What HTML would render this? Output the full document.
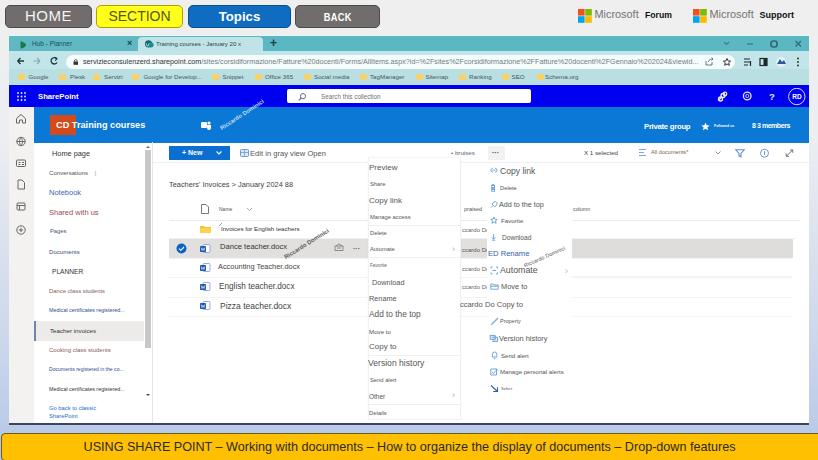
<!DOCTYPE html>
<html><head><meta charset="utf-8">
<style>
*{margin:0;padding:0;box-sizing:border-box}
html,body{width:818px;height:460px;overflow:hidden}
body{position:relative;font-family:"Liberation Sans",sans-serif;background:linear-gradient(180deg,#efefef 0%,#eceef2 30%,#cdd8ec 72%,#b4c7e8 100%)}
.a{position:absolute;white-space:nowrap}
.btn{position:absolute;top:5px;height:23px;border-radius:5px;text-align:center;line-height:23px}
#win{position:absolute;left:9px;top:37px;width:800px;height:388px;background:#fff;overflow:hidden;border-bottom:2px solid #3b4760}
</style></head><body>
<!-- nav buttons -->
<div class="btn" style="left:5px;width:87px;background:#716d6c;border:1px solid #4e4a49;color:#f4f4f4;font-size:15px;letter-spacing:0.5px;line-height:19.6px">HOME</div>
<div class="btn" style="left:96px;width:87px;background:#ffff1a;border:1px solid #a9a300;color:#55551c;font-size:14px;line-height:21px">SECTION</div>
<div class="btn" style="left:188px;width:103px;background:#0f6cc0;border:1px solid #0b4f8e;color:#fff;font-size:13.2px;font-weight:bold;line-height:21px">Topics</div>
<div class="btn" style="left:295px;width:85px;background:#716d6c;border:1px solid #4e4a49;color:#fff;font-size:9.3px;font-weight:bold;letter-spacing:0.3px"><span style="display:inline-block;font-size:11px;transform:scaleX(0.84);letter-spacing:0.4px">BACK</span></div>


<!-- microsoft logos -->
<svg class="a" style="left:578px;top:8.5px" width="14" height="14" viewBox="0 0 14 14"><rect x="0" y="0" width="6.6" height="6.6" fill="#f25022"/><rect x="7.2" y="0" width="6.6" height="6.6" fill="#7fba00"/><rect x="0" y="7.2" width="6.6" height="6.6" fill="#00a4ef"/><rect x="7.2" y="7.2" width="6.6" height="6.6" fill="#ffb900"/></svg>
<div class="a" style="left:594.5px;top:8px;font-size:10.9px;color:#737373">Microsoft</div>
<div class="a" style="left:645px;top:10px;font-size:8.7px;color:#111;font-weight:bold">Forum</div>
<svg class="a" style="left:692.5px;top:8.5px" width="14" height="14" viewBox="0 0 14 14"><rect x="0" y="0" width="6.6" height="6.6" fill="#f25022"/><rect x="7.2" y="0" width="6.6" height="6.6" fill="#7fba00"/><rect x="0" y="7.2" width="6.6" height="6.6" fill="#00a4ef"/><rect x="7.2" y="7.2" width="6.6" height="6.6" fill="#ffb900"/></svg>
<div class="a" style="left:709.5px;top:8px;font-size:10.9px;color:#737373">Microsoft</div>
<div class="a" style="left:759.5px;top:10px;font-size:9px;color:#111;font-weight:bold">Support</div>
<div id="win">
</div>

<!-- browser chrome -->
<div class="a" style="left:9px;top:35px;width:800px;height:1px;background:#e4fafa"></div>
<div class="a" style="left:9px;top:36px;width:800px;height:15px;background:#5bb7c1"></div>
<div class="a" style="left:9px;top:36px;width:129px;height:15px;background:#60b9c2"></div>
<div class="a" style="left:138px;top:36.5px;width:125px;height:15px;background:#bfe3e7;border-radius:4px 4px 0 0"></div>
<div class="a" style="left:9px;top:51px;width:800px;height:18px;background:#c2e5e9"></div><div class="a" style="left:9px;top:69px;width:800px;height:16px;background:#b9dfe3"></div><div class="a" style="left:9px;top:84px;width:800px;height:1px;background:#c6def2"></div>
<!-- tab 1 -->
<svg class="a" style="left:19.5px;top:40.5px" width="7" height="8" viewBox="0 0 7 8"><path d="M0.5 0.5C3 0.5 6 2.5 6 4S3 7.5 0.5 7.5Z" fill="#157a52"/></svg>
<div class="a" style="left:32px;top:40px;font-size:6.5px;color:#1b4f57">Hub - Planner</div>
<div class="a" style="left:127px;top:38px;font-size:9px;color:#22484c;font-weight:bold">×</div>
<!-- tab 2 -->
<svg class="a" style="left:144px;top:40px" width="10" height="8" viewBox="0 0 10 8"><circle cx="4.5" cy="3.8" r="3.6" fill="#0e6a6c"/><circle cx="7" cy="4.8" r="2.6" fill="#148f90"/><path d="M2 3.2L3 6H4.2L5 3.2" stroke="#d8f2f2" stroke-width="0.7" fill="none"/></svg>
<div class="a" style="left:156px;top:40px;font-size:6.1px;color:#24464b">Training courses - January 20 x</div>
<div class="a" style="left:270px;top:36px;font-size:12px;color:#1f3b3e;font-weight:bold">+</div>
<!-- window controls -->
<svg class="a" style="left:721.5px;top:39px" width="90" height="10" viewBox="0 0 90 10">
<path d="M2 3L4.5 5.5L7 3" stroke="#3b7f88" stroke-width="1.2" fill="none"/>
<path d="M25 5H31" stroke="#3b7f88" stroke-width="1.4"/>
<rect x="49" y="2" width="6" height="6" rx="2.2" stroke="#2d6a72" stroke-width="1.7" fill="none"/>
<path d="M73.5 2L79 7.5M79 2L73.5 7.5" stroke="#2d6a72" stroke-width="1.2"/>
</svg>
<!-- nav arrows -->
<svg class="a" style="left:15px;top:55px" width="50" height="12" viewBox="0 0 50 12">
<path d="M2.5 6H9M2.5 6L5.5 3M2.5 6L5.5 9" stroke="#1e3a3e" stroke-width="1.3" fill="none"/>
<path d="M18.5 6H25M25 6L22 3M25 6L22 9" stroke="#8aaaae" stroke-width="1.1" fill="none"/>
<path d="M41.5 3.5A3.2 3.2 0 1 0 42 7.5" stroke="#1e3a3e" stroke-width="1.3" fill="none"/><path d="M39.5 2.2L42 3.6L40.2 5.6" stroke="#1e3a3e" stroke-width="1.1" fill="none"/>
</svg>
<div class="a" style="left:66px;top:54.5px;width:669px;height:14px;background:#f6fcfc;border-radius:7px"></div>
<svg class="a" style="left:72.5px;top:58.5px" width="6" height="6" viewBox="0 0 6 6"><rect x="0.5" y="2.5" width="4.5" height="3.3" fill="#333"/><path d="M1.5 2.6V1.8A1.2 1.2 0 0 1 4 1.8V2.6" stroke="#333" stroke-width="0.8" fill="none"/></svg>
<div class="a" style="left:83px;top:56.5px;font-size:7.2px;color:#2c3436;letter-spacing:0px">servizieconsulenzerd.sharepoint.com<span style="color:#6e7d80">/sites/corsidiformazione/Fatture%20docenti/Forms/AllItems.aspx?id=%2Fsites%2Fcorsidiformazione%2FFatture%20docenti%2FGennaio%202024&amp;viewid...</span></div>
<svg class="a" style="left:703px;top:56px" width="110" height="12" viewBox="0 0 110 12">
<path d="M3 5V9H9V6M5 6C6 3.5 8 3 10 3M8.5 1.5L10 3L8.5 4.5" stroke="#5a6a6c" stroke-width="0.9" fill="none"/>
<path d="M24 2.5L25.1 4.9L27.6 5.1L25.7 6.8L26.3 9.3L24 8L21.7 9.3L22.3 6.8L20.4 5.1L22.9 4.9Z" stroke="#333" stroke-width="1" fill="none"/>
<path d="M41 3H47M41 6H47M41 9H45M47.5 5V10" stroke="#1e2a2c" stroke-width="1.2" fill="none"/>
<rect x="57" y="2.5" width="7" height="7" stroke="#1e2a2c" stroke-width="1.2" fill="none"/><rect x="60.5" y="2.5" width="3.5" height="7" fill="#1e2a2c"/>
<circle cx="78" cy="6" r="5" fill="#e6f0f2"/><path d="M74 8L77 3L79 6L81 4L83 8Z" fill="#2a5a9a"/>
<circle cx="95" cy="2.5" r="0.9" fill="#222"/><circle cx="95" cy="6" r="0.9" fill="#222"/><circle cx="95" cy="9.5" r="0.9" fill="#222"/>
</svg>
<!-- bookmarks -->
<div class="a" style="left:17.5px;top:73.5px;width:7px;height:6px;background:#f6d36a;border-radius:1px"></div><div class="a" style="left:28.5px;top:73.3px;font-size:6.2px;color:#46585b">Google</div>
<div class="a" style="left:58.5px;top:73.5px;width:7px;height:6px;background:#f6d36a;border-radius:1px"></div><div class="a" style="left:70px;top:73.3px;font-size:6.2px;color:#46585b">Plesk</div>
<div class="a" style="left:93px;top:73.5px;width:7px;height:6px;background:#f6d36a;border-radius:1px"></div><div class="a" style="left:104px;top:73.3px;font-size:6.2px;color:#46585b">Servizi</div>
<div class="a" style="left:132px;top:73.5px;width:7px;height:6px;background:#f6d36a;border-radius:1px"></div><div class="a" style="left:143.5px;top:73.3px;font-size:6.2px;color:#46585b">Google for Develop...</div>
<div class="a" style="left:212px;top:73.5px;width:7px;height:6px;background:#f6d36a;border-radius:1px"></div><div class="a" style="left:222.5px;top:73.3px;font-size:6.2px;color:#46585b">Snippet</div>
<div class="a" style="left:255px;top:73.5px;width:7px;height:6px;background:#f6d36a;border-radius:1px"></div><div class="a" style="left:265px;top:73.3px;font-size:6.2px;color:#46585b">Office 365</div>
<div class="a" style="left:303.5px;top:73.5px;width:7px;height:6px;background:#f6d36a;border-radius:1px"></div><div class="a" style="left:314px;top:73.3px;font-size:6.2px;color:#46585b">Social media</div>
<div class="a" style="left:360px;top:73.5px;width:7px;height:6px;background:#f6d36a;border-radius:1px"></div><div class="a" style="left:370px;top:73.3px;font-size:6.2px;color:#46585b">TagManager</div>
<div class="a" style="left:416px;top:73.5px;width:7px;height:6px;background:#f6d36a;border-radius:1px"></div><div class="a" style="left:425.5px;top:73.3px;font-size:6.2px;color:#46585b">Sitemap</div>
<div class="a" style="left:459px;top:73.5px;width:7px;height:6px;background:#f6d36a;border-radius:1px"></div><div class="a" style="left:469px;top:73.3px;font-size:6.2px;color:#46585b">Ranking</div>
<div class="a" style="left:501.5px;top:73.5px;width:7px;height:6px;background:#f6d36a;border-radius:1px"></div><div class="a" style="left:511.5px;top:73.3px;font-size:6.2px;color:#46585b">SEO</div>
<div class="a" style="left:536.5px;top:73.5px;width:7px;height:6px;background:#f6d36a;border-radius:1px"></div><div class="a" style="left:545px;top:73.3px;font-size:6.2px;color:#46585b">Schema.org</div>




<!-- SharePoint suite bar -->
<div class="a" style="left:9px;top:85px;width:800px;height:22px;background:#0000f0"></div>
<svg class="a" style="left:17px;top:92px" width="9" height="9" viewBox="0 0 9 9" fill="#e8e8ff"><circle cx="1" cy="1" r="0.9"/><circle cx="4.5" cy="1" r="0.9"/><circle cx="8" cy="1" r="0.9"/><circle cx="1" cy="4.5" r="0.9"/><circle cx="4.5" cy="4.5" r="0.9"/><circle cx="8" cy="4.5" r="0.9"/><circle cx="1" cy="8" r="0.9"/><circle cx="4.5" cy="8" r="0.9"/><circle cx="8" cy="8" r="0.9"/></svg>
<div class="a" style="left:38px;top:92px;font-size:7.7px;font-weight:bold;color:#fff">SharePoint</div>
<div class="a" style="left:287px;top:89px;width:244px;height:14px;background:#fff;border-radius:2px"></div>
<svg class="a" style="left:297px;top:91.5px" width="10" height="10" viewBox="0 0 10 10"><circle cx="6" cy="4.2" r="2.6" stroke="#6a6a9a" stroke-width="1" fill="none"/><path d="M4.2 6L1.8 8.4" stroke="#6a6a9a" stroke-width="1.1"/></svg>
<div class="a" style="left:321px;top:92.7px;font-size:6.3px;color:#707070">Search this collection</div>
<svg class="a" style="left:714px;top:88px" width="94" height="18" viewBox="0 0 94 18">
<circle cx="6.5" cy="11" r="2" stroke="#eef" stroke-width="1.3" fill="none"/><circle cx="9" cy="7.5" r="2" stroke="#eef" stroke-width="1.3" fill="none"/><circle cx="11" cy="6" r="1.8" stroke="#eef" stroke-width="1.2" fill="none"/><path d="M4.5 12L7 10" stroke="#eef" stroke-width="1.2"/>
<circle cx="33.2" cy="8" r="3.8" stroke="#e6e6ff" stroke-width="1.3" fill="none"/><circle cx="33.2" cy="8" r="1.6" stroke="#e6e6ff" stroke-width="0.8" fill="none"/>
<text x="55" y="11.6" font-size="9.5" fill="#eef" font-family="Liberation Sans" font-weight="bold">?</text>
<circle cx="82.8" cy="8.5" r="8.2" stroke="#dcdcff" stroke-width="1" fill="none"/><text x="78.2" y="11" font-size="6.5" fill="#fff" font-family="Liberation Sans" font-weight="bold">RD</text>
</svg>
<!-- site header -->
<div class="a" style="left:34px;top:107px;width:775px;height:35.6px;background:#0a78d4"></div>
<div class="a" style="left:50px;top:115px;width:26px;height:20px;background:#d54a1a"></div>
<div class="a" style="left:56px;top:120px;font-size:9.2px;font-weight:bold;color:#fff">CD Training courses</div>
<svg class="a" style="left:201px;top:121px" width="11" height="9" viewBox="0 0 11 9"><circle cx="8" cy="2" r="1.6" fill="#fff"/><rect x="0" y="1" width="6" height="6" rx="1" fill="#fff"/><path d="M6 4H10V7A2 2 0 0 1 6 7Z" fill="#fff"/></svg>
<div class="a" style="left:644px;top:122px;font-size:7.7px;color:#fff;font-weight:bold;letter-spacing:-0.25px">Private group</div>
<svg class="a" style="left:701px;top:122px" width="9" height="9" viewBox="0 0 10 10"><path d="M5 0.5L6.3 3.6L9.6 3.8L7.1 6L7.9 9.3L5 7.5L2.1 9.3L2.9 6L0.4 3.8L3.7 3.6Z" fill="#fff"/></svg>
<div class="a" style="left:714px;top:124.3px;font-size:3.5px;color:#fff;font-weight:bold">Followed us</div>
<div class="a" style="left:752px;top:122.3px;font-size:7px;color:#fff;font-weight:bold;letter-spacing:-0.45px">8 3 members</div>
<!-- left rail -->
<div class="a" style="left:9px;top:107px;width:25px;height:316px;background:#f3f2f1"></div>
<svg class="a" style="left:13px;top:110.5px" width="16" height="126" viewBox="0 0 16 126" stroke="#666" fill="none" stroke-width="1">
<path d="M3.5 12V7.5L8 3.5L12.5 7.5V12H9.5V9H6.5V12Z"/>
<circle cx="8" cy="30.5" r="4.2"/><path d="M3.8 30.5H12.2M8 26.3C6 28.5 6 32.5 8 34.7M8 26.3C10 28.5 10 32.5 8 34.7"/>
<rect x="3.5" y="49" width="9" height="6.5" rx="1"/><path d="M5.5 51.5H7.5M5.5 53.5H7.5M9 51.5H11M9 53.5H11"/>
<path d="M5 69H9L11.5 71.5V78H5Z"/>
<rect x="4" y="92" width="8" height="7" rx="1"/><path d="M4 94.5H12M6.5 94.5V99"/>
<circle cx="8" cy="119" r="4.2"/><path d="M8 116.8V121.2M5.8 119H10.2"/>
</svg>


<!-- left nav -->
<div class="a" style="left:52px;top:149px;font-size:7.35px;color:#333">Home page</div>
<div class="a" style="left:49px;top:168.5px;font-size:6.1px;color:#555">Conversations &nbsp; &nbsp;<span style="color:#999">|</span></div>
<div class="a" style="left:49px;top:187.5px;font-size:7.5px;color:#4068b0">Notebook</div>
<div class="a" style="left:49px;top:207.5px;font-size:7.5px;color:#a04858">Shared with us</div>
<div class="a" style="left:50px;top:227.5px;font-size:5.8px;color:#45527a">Pages</div>
<div class="a" style="left:49px;top:248px;font-size:6.1px;color:#3f4f7a">Documents</div>
<div class="a" style="left:52px;top:267.5px;font-size:6.6px;color:#333">PLANNER</div>
<div class="a" style="left:49px;top:288px;font-size:5.9px;color:#8c5a5e">Dance class students</div>
<div class="a" style="left:49px;top:307px;font-size:5.4px;color:#2b4a8f">Medical certificates registered...</div>
<div class="a" style="left:34px;top:321px;width:110px;height:19.5px;background:#edebe9"></div>
<div class="a" style="left:34px;top:321px;width:1.5px;height:19.5px;background:#6a86a8"></div>
<div class="a" style="left:50px;top:326.5px;font-size:6.2px;color:#333">Teacher invoices</div>
<div class="a" style="left:49px;top:346.5px;font-size:6px;color:#8c5a5e">Cooking class students</div>
<div class="a" style="left:49px;top:366px;font-size:5.1px;color:#2b4a8f">Documents registered in the co...</div>
<div class="a" style="left:49px;top:386px;font-size:5.4px;color:#333">Medical certificates registered...</div>
<div class="a" style="left:49px;top:403.5px;font-size:5.8px;color:#1f6ac8;line-height:8.5px">Go back to classic<br>SharePoint</div>
<!-- nav scrollbar -->
<div class="a" style="left:144px;top:146px;width:7px;height:254px;background:#fff"></div>
<div class="a" style="left:145px;top:150px;width:6px;height:198px;background:#c8c8c8"></div>
<svg class="a" style="left:145px;top:145px" width="6" height="4" viewBox="0 0 6 4"><path d="M1 3L3 1L5 3Z" fill="#666"/></svg>
<svg class="a" style="left:145px;top:393px" width="6" height="4" viewBox="0 0 6 4"><path d="M1 1L3 3L5 1Z" fill="#444"/></svg>
<div class="a" style="left:152px;top:142px;width:1px;height:281px;background:#e6e6e6"></div>


<!-- command bar -->
<div class="a" style="left:169px;top:146px;width:61px;height:14px;background:#0b6fd1"></div>
<div class="a" style="left:182px;top:148.5px;font-size:7px;font-weight:bold;color:#fff">+ New</div>
<svg class="a" style="left:215px;top:150px" width="8" height="6" viewBox="0 0 8 6"><path d="M1.5 1.5L4 4L6.5 1.5" stroke="#fff" stroke-width="1.1" fill="none"/></svg>
<svg class="a" style="left:240px;top:149px" width="9" height="9" viewBox="0 0 9 9"><rect x="0.5" y="0.5" width="8" height="7" rx="1" stroke="#6f9ad0" fill="#dce8f8"/><path d="M4.5 0.5V7.5M0.5 3.5H8.5" stroke="#6f9ad0" stroke-width="0.8"/></svg>
<div class="a" style="left:250px;top:148.5px;font-size:7.6px;color:#555">Edit in gray view Open</div>
<div class="a" style="left:153px;top:162px;width:215px;height:1px;background:#f2f2f2"></div>
<div class="a" style="left:451px;top:148.5px;font-size:6.2px;color:#56657e">• bruises</div>
<div class="a" style="left:488px;top:146px;width:17px;height:14px;background:#f2f2f2"></div>
<div class="a" style="left:492px;top:148.5px;font-size:7px;color:#333;font-weight:bold">···</div>
<div class="a" style="left:584px;top:149px;font-size:6.2px;color:#444">X 1 selected</div>
<svg class="a" style="left:638px;top:148px" width="10" height="9" viewBox="0 0 10 9"><path d="M1 1.5H8M1 4.5H6M1 7.5H8" stroke="#7aa6dc" stroke-width="1"/></svg>
<div class="a" style="left:651px;top:149px;font-size:5.6px;color:#7a5f4a">All documents*</div>
<svg class="a" style="left:714px;top:150px" width="8" height="6" viewBox="0 0 8 6"><path d="M1.5 1.5L4 4L6.5 1.5" stroke="#888" stroke-width="0.9" fill="none"/></svg>
<svg class="a" style="left:734px;top:147px" width="64" height="12" viewBox="0 0 64 12" fill="none">
<path d="M1.8 2.8H10.2L7 6.5V9.8L5 8.8V6.5Z" stroke="#5d8fd4" stroke-width="1.1"/>
<circle cx="30.5" cy="6.2" r="4" stroke="#6a98d8" stroke-width="1"/><path d="M30.5 4.2V8" stroke="#6a98d8" stroke-width="1.1"/>
<path d="M52.5 9L58.5 3.2M56 3H58.8V5.8M52.2 6.4V9.3H55" stroke="#707070" stroke-width="1"/>
</svg>
<div class="a" style="left:153px;top:162px;width:656px;height:1px;background:#f0f0f0"></div>
<!-- breadcrumb -->
<div class="a" style="left:169px;top:179.5px;font-size:7.4px;color:#444">Teachers' Invoices &gt; January 2024 88</div>
<!-- list header -->
<svg class="a" style="left:201px;top:204px" width="8" height="10" viewBox="0 0 8 10"><path d="M0.5 0.5H5L7.5 3V9.5H0.5Z" stroke="#555" stroke-width="0.8" fill="none"/></svg>
<div class="a" style="left:219px;top:206px;font-size:5px;color:#555">Name</div>
<svg class="a" style="left:246px;top:207px" width="7" height="5" viewBox="0 0 7 5"><path d="M1 1L3.5 3.5L6 1" stroke="#999" stroke-width="0.8" fill="none"/></svg>
<div class="a" style="left:464px;top:206px;font-size:5.5px;color:#555">praised</div>
<div class="a" style="left:573px;top:206px;font-size:5.3px;color:#555">column</div>
<div class="a" style="left:169px;top:219.5px;width:631px;height:1px;background:#ebebeb"></div>
<!-- folder row -->
<svg class="a" style="left:200px;top:225px" width="11" height="8" viewBox="0 0 11 8"><path d="M0 1H4L5 2H11V8H0Z" fill="#f3c13a"/><path d="M0 3H11V8H0Z" fill="#ffd24d"/></svg>
<svg class="a" style="left:218px;top:222px" width="5" height="5" viewBox="0 0 5 5"><path d="M1 4L4 1" stroke="#6a8ac8" stroke-width="0.8"/></svg>
<div class="a" style="left:221px;top:225px;font-size:6.15px;color:#333">Invoices for English teachers</div>
<div class="a" style="left:169px;top:238px;width:627px;height:1px;background:#f1f1f1"></div>
<!-- selected row -->
<div class="a" style="left:169px;top:239px;width:623.5px;height:19px;background:#e1e0de"></div>
<svg class="a" style="left:176px;top:243px" width="11" height="11" viewBox="0 0 11 11"><circle cx="5.5" cy="5.5" r="5" fill="#0b63c9"/><path d="M3 5.6L4.8 7.3L8 4" stroke="#fff" stroke-width="1.1" fill="none"/></svg>
<div class="a" style="left:220px;top:242px;font-size:7.6px;color:#333">Dance teacher.docx</div>
<svg class="a" style="left:334px;top:243px" width="10" height="8" viewBox="0 0 10 8"><rect x="1" y="3" width="8" height="4.5" stroke="#777" stroke-width="0.8" fill="none"/><path d="M2 3L5 0.8L8 3M3 5H7" stroke="#777" stroke-width="0.8" fill="none"/></svg>
<div class="a" style="left:353px;top:245px;font-size:7px;color:#555;font-weight:bold">···</div>
<!-- other rows -->
<div class="a" style="left:218px;top:262px;font-size:7.4px;color:#444">Accounting Teacher.docx</div>
<div class="a" style="left:169px;top:277px;width:623px;height:1px;background:#f3f3f3"></div>
<div class="a" style="left:219px;top:281.5px;font-size:8.2px;color:#444">English teacher.docx</div>
<div class="a" style="left:169px;top:296.5px;width:623px;height:1px;background:#f3f3f3"></div>
<div class="a" style="left:220px;top:301px;font-size:8.5px;color:#444">Pizza teacher.docx</div>
<div class="a" style="left:169px;top:316px;width:623px;height:1px;background:#f3f3f3"></div>
<div class="a" style="left:169px;top:258px;width:623px;height:1px;background:#f3f3f3"></div>
<svg class="a" style="left:200px;top:244px" width="11" height="9" viewBox="0 0 11 9"><rect x="3" y="0.5" width="7" height="8" rx="1" stroke="#7a9bd0" stroke-width="0.8" fill="#fff"/><rect x="0" y="2" width="6" height="6" rx="0.8" fill="#2157b8"/><path d="M1.2 3.5L2 6.5L3 4.3L4 6.5L4.8 3.5" stroke="#fff" stroke-width="0.6" fill="none"/></svg>
<svg class="a" style="left:200px;top:263px" width="11" height="9" viewBox="0 0 11 9"><rect x="3" y="0.5" width="7" height="8" rx="1" stroke="#7a9bd0" stroke-width="0.8" fill="#fff"/><rect x="0" y="2" width="6" height="6" rx="0.8" fill="#2157b8"/><path d="M1.2 3.5L2 6.5L3 4.3L4 6.5L4.8 3.5" stroke="#fff" stroke-width="0.6" fill="none"/></svg>
<svg class="a" style="left:200px;top:282px" width="11" height="9" viewBox="0 0 11 9"><rect x="3" y="0.5" width="7" height="8" rx="1" stroke="#7a9bd0" stroke-width="0.8" fill="#fff"/><rect x="0" y="2" width="6" height="6" rx="0.8" fill="#2157b8"/><path d="M1.2 3.5L2 6.5L3 4.3L4 6.5L4.8 3.5" stroke="#fff" stroke-width="0.6" fill="none"/></svg>
<svg class="a" style="left:200px;top:301px" width="11" height="9" viewBox="0 0 11 9"><rect x="3" y="0.5" width="7" height="8" rx="1" stroke="#7a9bd0" stroke-width="0.8" fill="#fff"/><rect x="0" y="2" width="6" height="6" rx="0.8" fill="#2157b8"/><path d="M1.2 3.5L2 6.5L3 4.3L4 6.5L4.8 3.5" stroke="#fff" stroke-width="0.6" fill="none"/></svg>
<div class="a" style="left:283px;top:255px;font-size:5.9px;color:#5a5a5a;transform:rotate(-32deg);transform-origin:0 0;font-weight:bold">Riccardo Dominici</div>
<div class="a" style="left:219px;top:126px;font-size:5.8px;color:#c4dcf2;transform:rotate(-33deg);transform-origin:0 0;font-weight:bold">Riccardo Dominici</div>
<!-- modified by column -->
<div class="a" style="left:462px;top:227px;font-size:6px;color:#666">ccardo Do</div>
<div class="a" style="left:462px;top:246.5px;font-size:6px;color:#555">ccardo Do</div>
<div class="a" style="left:462px;top:266px;font-size:6px;color:#666">ccardo Do</div>
<div class="a" style="left:462px;top:283.5px;font-size:6px;color:#666">ccardo Do</div>


<!-- right gray row part + separators -->
<!-- menu 1 -->
<div class="a" style="left:368px;top:157px;width:93px;height:263px;background:#fff;border:1px solid #f1f1f1;border-top-color:#f7f7f7;box-shadow:0 0 2px rgba(0,0,0,0.04)"></div>
<div class="a" style="left:369px;top:163px;font-size:8px;color:#555">Preview</div>
<div class="a" style="left:370px;top:180.5px;font-size:5.8px;color:#555">Share</div>
<div class="a" style="left:369px;top:195.5px;font-size:8px;color:#555">Copy link</div>
<div class="a" style="left:370px;top:213.5px;font-size:5.8px;color:#555">Manage access</div>
<div class="a" style="left:369px;top:225px;width:91px;height:1px;background:#f0f0f0"></div>
<div class="a" style="left:370px;top:229.5px;font-size:5.8px;color:#555">Delete</div>
<div class="a" style="left:370px;top:246px;font-size:5.8px;color:#555">Automate</div>
<div class="a" style="left:452px;top:244px;font-size:9px;color:#b0b0b0">›</div>
<div class="a" style="left:369px;top:257px;width:91px;height:1px;background:#f0f0f0"></div>
<div class="a" style="left:370px;top:263px;font-size:4.7px;color:#666">Favorite</div>
<div class="a" style="left:372px;top:278px;font-size:7.3px;color:#555">Download</div>
<div class="a" style="left:369px;top:293.5px;font-size:7.3px;color:#555">Rename</div>
<div class="a" style="left:369px;top:309px;font-size:8.3px;color:#555">Add to the top</div>
<div class="a" style="left:369px;top:327.5px;font-size:6.2px;color:#555">Move to</div>
<div class="a" style="left:369px;top:341.5px;font-size:8px;color:#555">Copy to</div>
<div class="a" style="left:369px;top:355px;width:91px;height:1px;background:#f0f0f0"></div>
<div class="a" style="left:368px;top:358px;font-size:8.6px;color:#555">Version history</div>
<div class="a" style="left:370px;top:376.5px;font-size:5.8px;color:#555">Send alert</div>
<div class="a" style="left:369px;top:392.5px;font-size:6.5px;color:#555">Other</div>
<div class="a" style="left:452px;top:390px;font-size:9px;color:#b0b0b0">›</div>
<div class="a" style="left:369px;top:404px;width:91px;height:1px;background:#eeeeee"></div>
<div class="a" style="left:369px;top:409.5px;font-size:5.8px;color:#555">Details</div>
<!-- menu 2 -->
<div class="a" style="left:487px;top:163px;width:85px;height:235px;background:#fff"></div>
<div class="a" style="left:572px;top:239px;width:220.5px;height:19px;background:#dedddb"></div>
<div class="a" style="left:572px;top:276px;width:220px;height:1px;background:#f5f5f5"></div>
<div class="a" style="left:572px;top:297px;width:220px;height:1px;background:#f5f5f5"></div>
<div class="a" style="left:572px;top:315.5px;width:220px;height:1px;background:#f5f5f5"></div>
<div class="a" style="left:500px;top:165.5px;font-size:8.6px;color:#555">Copy link</div>
<div class="a" style="left:500px;top:184.5px;font-size:5.8px;color:#555">Delete</div>
<div class="a" style="left:499px;top:200px;font-size:7.2px;color:#555">Add to the top</div>
<div class="a" style="left:501px;top:216.5px;font-size:6.2px;color:#555">Favorite</div>
<div class="a" style="left:502px;top:234px;font-size:6.6px;color:#555">Download</div>
<div class="a" style="left:488px;top:249px;font-size:7.6px;color:#2f63a8">ED Rename</div>
<div class="a" style="left:500px;top:264.5px;font-size:8.8px;color:#555">Automate</div>
<div class="a" style="left:565px;top:266px;font-size:9px;color:#b0b0b0">›</div>
<div class="a" style="left:501px;top:281.5px;font-size:7.4px;color:#555">Move to</div>
<div class="a" style="left:460px;top:300px;font-size:7.6px;color:#555">ccardo Do Copy to</div>
<div class="a" style="left:500px;top:318px;font-size:5.5px;color:#555">Property</div>
<div class="a" style="left:499px;top:333.5px;font-size:7.4px;color:#555">Version history</div>
<div class="a" style="left:501px;top:351.5px;font-size:6.1px;color:#555">Send alert</div>
<div class="a" style="left:500px;top:368px;font-size:6.1px;color:#555">Manage personal alerts</div>
<div class="a" style="left:501px;top:386px;font-size:4px;color:#555">Select</div>
<div class="a" style="left:523px;top:262.5px;font-size:5.5px;color:#555;transform:rotate(-24deg);transform-origin:0 0">Riccardo Dominici</div>
<svg class="a" style="left:488px;top:164px" width="12" height="230" viewBox="0 0 12 230" stroke="#5b98d6" fill="none" stroke-width="0.85">
<path d="M5 8H4.2A1.9 1.9 0 0 1 4.2 4.4H5M7 8H7.8A1.9 1.9 0 0 0 7.8 4.4H7M4.6 6.2H7.4"/>
<path d="M3.7 21.5H6.5V27.3H3.7ZM3.2 21.3H7M4.3 20.6H6M4.6 23V26M5.6 23V26"/>
<path d="M3 43.5L5 41.5M5.2 38.5L7.8 37.5L9.3 39L8.3 41.5L6.8 42.8L4.2 40.2Z"/>
<path d="M6 53L6.9 55.2L9.3 55.4L7.5 56.9L8.1 59.3L6 58L3.9 59.3L4.5 56.9L2.7 55.4L5.1 55.2Z"/>
<path d="M5.6 70V75M3.8 73.3L5.6 75.2L7.4 73.3M4 76.2H7.2"/>
<path d="M3 104.5V103H4.5M3 108.5V110H4.5M9.5 104.5V103H8M9.5 108.5V110H8M4.5 106.5H8"/>
<path d="M2.8 120H5.2L6 121H10.2V125.2H2.8ZM2.8 122.2H10.2"/>
<path d="M3.7 159.8L9.5 154L10 154.5L4.2 160.3L3.4 160.6Z" stroke-width="0.9"/>
<path d="M2.2 171.4H7.2V175.4H2.2ZM4.2 173.2H9.6V177.4H4.2" stroke-width="0.9" fill="#dfeaf7"/>
<path d="M4.4 193V190.2A2.2 2.2 0 0 1 8.8 190.2V193ZM5.8 194.3H7.3"/>
<path d="M2.8 205H8.5V211H2.8ZM4 208L5.4 209.6L7.8 206.5M8 204.5L9.8 206.3"/>
<path d="M3 221.5L9.5 227.5M9.5 223.3V227.5H5.3" stroke="#2a63b0" stroke-width="1.1"/>
</svg>

<!-- caption -->
<div class="a" style="left:1px;top:433px;width:830px;height:28px;background:#fec000;border:1px solid #6b5a1a;border-radius:4px;color:#2a2a2a;font-size:12.6px;line-height:26px;padding-right:13px;text-align:center">USING SHARE POINT – Working with documents – How to organize the display of documents – Drop-down features</div>
</body></html>
